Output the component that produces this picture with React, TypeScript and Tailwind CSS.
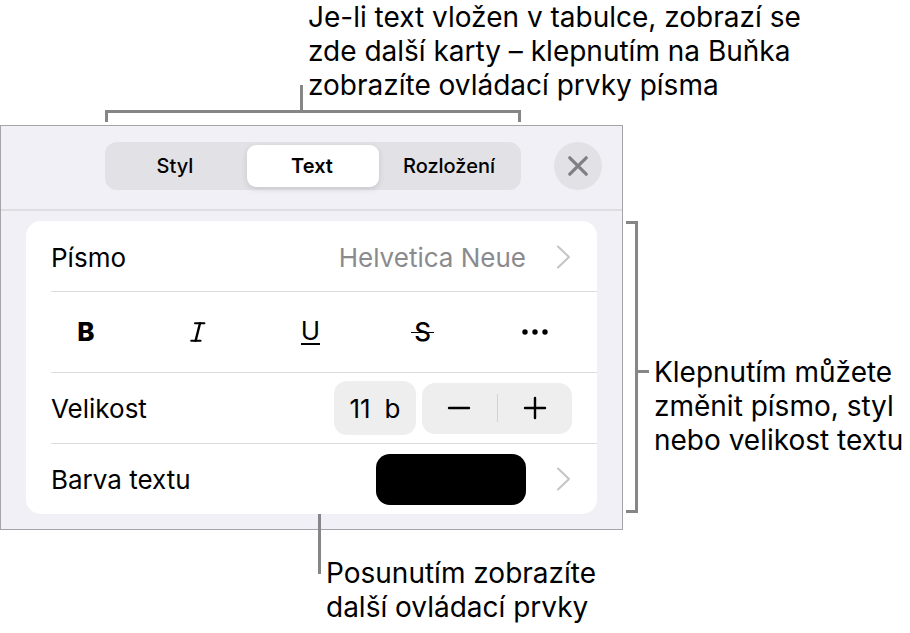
import { useState } from "react";
import type { ReactNode } from "react";
import { clsx } from "clsx";

const tabs = ["Styl", "Text", "Rozložení"];

function Chevron() {
  return (
    <svg className="h-6 w-4" viewBox="0 0 16 24" fill="none" stroke="#c4c4c6" strokeWidth="2" strokeLinecap="round" strokeLinejoin="round" aria-hidden="true">
      <path d="M2 1.5 13 12 2 22.5" />
    </svg>
  );
}

function Row({ children, last }: { children: ReactNode; last?: boolean }) {
  return (
    <div className={clsx("ml-[25px] flex items-center", last ? "h-[70px]" : "h-[71px] border-b border-[#dcdcde]")}>
      {children}
    </div>
  );
}

function FormatPanel() {
  const [active, setActive] = useState("Text");
  const [size, setSize] = useState(11);

  return (
    <div className="min-w-0 flex-1 border border-[#a5a5a8] bg-[#f1f0f6] pb-[15px]">
      <header className="flex items-center border-b-2 border-[#dedde2] pt-4 pr-5 pb-[19px] pl-[104px]">
        <div className="grid h-12 flex-1 grid-cols-[1fr_132px_1fr] rounded-xl bg-[#e2e1e6] py-[3px]" role="tablist">
          {tabs.map((tab) => (
            <button
              key={tab}
              role="tab"
              aria-selected={active === tab}
              onClick={() => setActive(tab)}
              className={clsx(
                "rounded-[9px] pr-0.5 text-[20px] leading-6",
                active === tab ? "bg-white font-semibold shadow-[0_2px_6px_rgba(0,0,0,0.12)]" : "font-medium"
              )}
            >
              {tab}
            </button>
          ))}
        </div>
        <button aria-label="Zavřít" className="ml-[33px] flex size-12 items-center justify-center rounded-full bg-[#e2e1e6]">
          <svg className="size-5" viewBox="0 0 20 20" fill="none" stroke="#7f7f84" strokeWidth="3.2" strokeLinecap="round" aria-hidden="true">
            <path d="M1.8 1.8 18.2 18.2M18.2 1.8 1.8 18.2" />
          </svg>
        </button>
      </header>

      <div className="mx-[25px] mt-[10px] rounded-[15px] bg-white">
        <Row>
          <button className="flex flex-1 items-center pt-0.5 pr-[25px] text-[26px]">
            <span>Písmo</span>
            <span className="ml-auto text-[#8b8b8f]">Helvetica Neue</span>
            <span className="ml-[30px]">
              <Chevron />
            </span>
          </button>
        </Row>

        <div className="ml-[25px] flex h-[81px] items-center justify-between border-b border-[#dcdcde] pr-[27px] text-[26px] leading-8">
          <button aria-label="Tučné" className="w-[70px] font-extrabold">B</button>
          <button aria-label="Kurzíva" className="flex w-[70px] justify-center">
            <svg className="size-5" viewBox="0 0 20 20" fill="none" stroke="black" strokeLinecap="round" aria-hidden="true">
              <path d="M7 1.2H16.4M3.2 18.8H12.6" strokeWidth="2" />
              <path d="M12 1.2 7.6 18.8" strokeWidth="2.4" />
            </svg>
          </button>
          <button aria-label="Podtržené" className="flex w-[70px] justify-center">
            <span className="border-b-2 border-black leading-6">U</span>
          </button>
          <button aria-label="Přeškrtnuté" className="flex w-[70px] justify-center">
            <span className="relative px-[3px] font-medium">
              S
              <span className="absolute inset-x-0 top-1/2 h-px bg-black" />
            </span>
          </button>
          <button aria-label="Více" className="flex w-[70px] justify-center">
            <svg className="h-2 w-[26px]" viewBox="0 0 26 8" aria-hidden="true">
              <circle cx="3" cy="4" r="2.7" />
              <circle cx="13" cy="4" r="2.7" />
              <circle cx="23" cy="4" r="2.7" />
            </svg>
          </button>
        </div>

        <Row>
          <span className="text-[26px]">Velikost</span>
          <button className="ml-auto flex h-[54px] w-[82px] items-center justify-center gap-[14px] rounded-[13px] bg-[#eeeeef] text-[26px]">
            <span>{size}</span>
            <span>b</span>
          </button>
          <div className="mr-[25px] ml-[6px] flex h-[51px] w-[150px] items-center rounded-[13px] bg-[#eeeeee]">
            <button aria-label="Zmenšit" onClick={() => setSize(size - 1)} className="flex h-full flex-1 items-center justify-center">
              <svg className="size-6" viewBox="0 0 24 24" stroke="black" strokeWidth="2.4" strokeLinecap="round" aria-hidden="true">
                <path d="M2 12H22" />
              </svg>
            </button>
            <span className="h-7 w-px bg-[#d2d2d4]" />
            <button aria-label="Zvětšit" onClick={() => setSize(size + 1)} className="flex h-full flex-1 items-center justify-center">
              <svg className="size-6" viewBox="0 0 24 24" stroke="black" strokeWidth="2.4" strokeLinecap="round" aria-hidden="true">
                <path d="M2 12H22M12 2V22" />
              </svg>
            </button>
          </div>
        </Row>

        <Row last>
          <button className="flex flex-1 items-center pr-[25px] text-[26px]">
            <span>Barva textu</span>
            <span className="ml-auto h-[51px] w-[150px] rounded-[14px] bg-black" />
            <span className="ml-[30px]">
              <Chevron />
            </span>
          </button>
        </Row>
      </div>
    </div>
  );
}

export default function App() {
  return (
    <main className="bg-white font-['Inter',sans-serif] text-black">
      <div className="flex h-[110px] gap-[5px] pl-[300px]">
        <span className="h-[25px] w-[3px] self-end bg-[#868686]" />
        <p className="text-[28px] leading-[34px]">
          Je-li text vložen v tabulce, zobrazí se
          <br />
          zde další karty – klepnutím na Buňka
          <br />
          zobrazíte ovládací prvky písma
        </p>
      </div>
      <div className="mr-[389px] mb-[3px] ml-[105px] h-3 border-x-[3px] border-t-[3px] border-[#868686]" />

      <div className="flex">
        <FormatPanel />
        <div className="mt-24 mb-[17px] ml-[3px] w-3 border-y-[3px] border-r-[3px] border-[#868686]" />
        <div className="mt-[245px] h-[3px] w-[11px] bg-[#868686]" />
        <p className="mt-[230px] w-[261px] pl-[5px] text-[28px] leading-[34px]">
          Klepnutím můžete
          <br />
          změnit písmo, styl
          <br />
          nebo velikost textu
        </p>
      </div>

      <div className="relative -mt-4 flex gap-[5px] pl-[318px]">
        <span className="h-[60px] w-[3px] bg-[#868686]" />
        <p className="pt-[42px] text-[28px] leading-[34px]">
          Posunutím zobrazíte
          <br />
          další ovládací prvky
        </p>
      </div>
    </main>
  );
}
